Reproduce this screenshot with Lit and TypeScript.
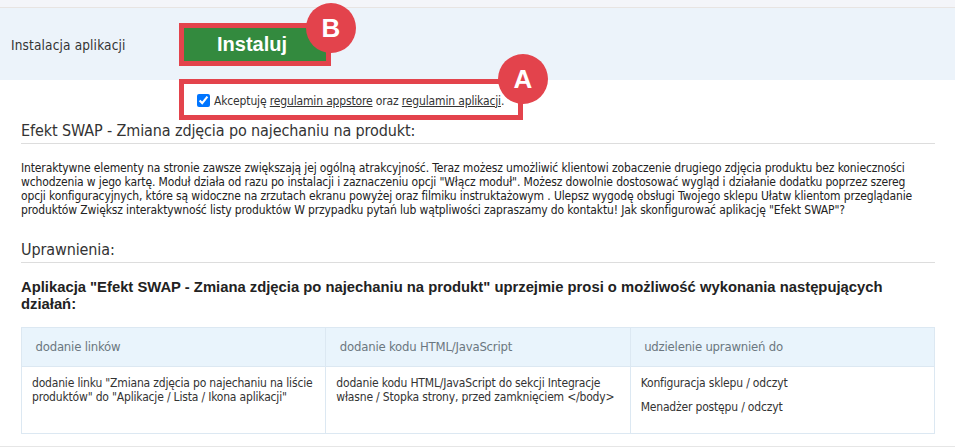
import { LitElement, html, css } from "lit";
import { customElement } from "lit/decorators.js";

@customElement("app-root")
export class AppRoot extends LitElement {
  static styles = css`
    :host { display: block; width: 955px; height: 447px; overflow: hidden; position: relative; background: #fff; color: #222; font-family: "DejaVu Sans Condensed", Tahoma, sans-serif; font-size: 12px; line-height: 14px; }
    .top { height: 7px; background: #f4f5f9; border-bottom: 1px solid #e8e4e2; }
    .band { height: 72px; background: #ecf3fa; display: flex; align-items: center; padding-left: 11px; box-sizing: border-box; }
    .band .lbl { width: 173px; color: #333; font-size: 13.5px; letter-spacing: 0.15px; padding-top: 2px; }
    .btn { width: 142px; height: 33px; background: #338a3e; color: #fff; font: bold 20px "Liberation Sans", sans-serif; display: flex; align-items: center; justify-content: center; padding-right: 6px; box-sizing: border-box; }
    .accept { display: flex; align-items: center; margin: 12px 0 0 197px; height: 17px; color: #333; letter-spacing: -0.15px; }
    .accept input { margin: 0 4px 0 0; width: 13px; height: 13px; accent-color: #0075ff; }
    .accept a { color: #333; text-decoration: underline; }
    main { padding: 0 20px 0 21px; }
    h2 { font-weight: 400; font-size: 16px; line-height: 20px; margin: 0; color: #333; padding-bottom: 2px; border-bottom: 1px solid #ddd; letter-spacing: -0.11px; }
    .h1 { margin-top: 12px; }
    p { margin: 17px 0 0; letter-spacing: -0.135px; max-width: 895px; }
    .h2 { margin-top: 23px; }
    h3 { font-size: 14.8px; line-height: 17px; margin: 16px 0 0; color: #222; font-weight: 700; font-family: "Liberation Sans", sans-serif; }
    table { border-collapse: collapse; margin-top: 14px; width: 914px; table-layout: fixed; }
    th, td { border: 1px solid #dce8f2; text-align: left; font-weight: 400; vertical-align: top; }
    th { background: #e9f4fc; color: #6b7780; font-size: 13px; height: 38px; padding: 0 13.5px; vertical-align: middle; letter-spacing: -0.2px; }
    td { height: 67px; padding: 9px 10px; color: #333; letter-spacing: -0.18px; box-sizing: border-box; }
    td div + div { margin-top: 10px; }
    .foot { position: absolute; left: 0; right: 0; top: 446px; height: 1px; background: #e6e6e6; }
    .mark { position: absolute; border: 5px solid #e3434c; box-sizing: border-box; }
    .circle { position: absolute; width: 50px; height: 50px; border-radius: 50%; background: #e3434c; color: #fff; font: bold 26px/50px "Liberation Sans", sans-serif; text-align: center; }
  `;
  render() {
    return html`
      <div class="top"></div>
      <div class="band"><span class="lbl">Instalacja aplikacji</span><span class="btn">Instaluj</span></div>
      <div class="accept"><input type="checkbox" checked /><span>Akceptuję <a>regulamin appstore</a> oraz <a>regulamin aplikacji</a>.</span></div>
      <main>
        <h2 class="h1">Efekt SWAP - Zmiana zdjęcia po najechaniu na produkt:</h2>
        <p>Interaktywne elementy na stronie zawsze zwiększają jej ogólną atrakcyjność. Teraz możesz umożliwić klientowi zobaczenie drugiego zdjęcia produktu bez konieczności wchodzenia w jego kartę. Moduł działa od razu po instalacji i zaznaczeniu opcji "Włącz moduł". Możesz dowolnie dostosować wygląd i działanie dodatku poprzez szereg opcji konfiguracyjnych, które są widoczne na zrzutach ekranu powyżej oraz filmiku instruktażowym . Ulepsz wygodę obsługi Twojego sklepu Ułatw klientom przeglądanie produktów Zwiększ interaktywność listy produktów W przypadku pytań lub wątpliwości zapraszamy do kontaktu! Jak skonfigurować aplikację "Efekt SWAP"?</p>
        <h2 class="h2">Uprawnienia:</h2>
        <h3>Aplikacja "Efekt SWAP - Zmiana zdjęcia po najechaniu na produkt" uprzejmie prosi o możliwość wykonania następujących działań:</h3>
        <table>
          <tr><th>dodanie linków</th><th>dodanie kodu HTML/JavaScript</th><th>udzielenie uprawnień do</th></tr>
          <tr>
            <td>dodanie linku "Zmiana zdjęcia po najechaniu na liście produktów" do "Aplikacje / Lista / Ikona aplikacji"</td>
            <td>dodanie kodu HTML/JavaScript do sekcji Integracje własne / Stopka strony, przed zamknięciem &lt;/body&gt;</td>
            <td><div>Konfiguracja sklepu / odczyt</div><div>Menadżer postępu / odczyt</div></td>
          </tr>
        </table>
      </main>
      <div class="foot"></div>
      <div class="mark" style="left:179px;top:23px;width:152px;height:43px"></div>
      <div class="circle" style="left:306px;top:3px">B</div>
      <div class="mark" style="left:179px;top:79px;width:344px;height:41px"></div>
      <div class="circle" style="left:498px;top:54px">A</div>
    `;
  }
}
